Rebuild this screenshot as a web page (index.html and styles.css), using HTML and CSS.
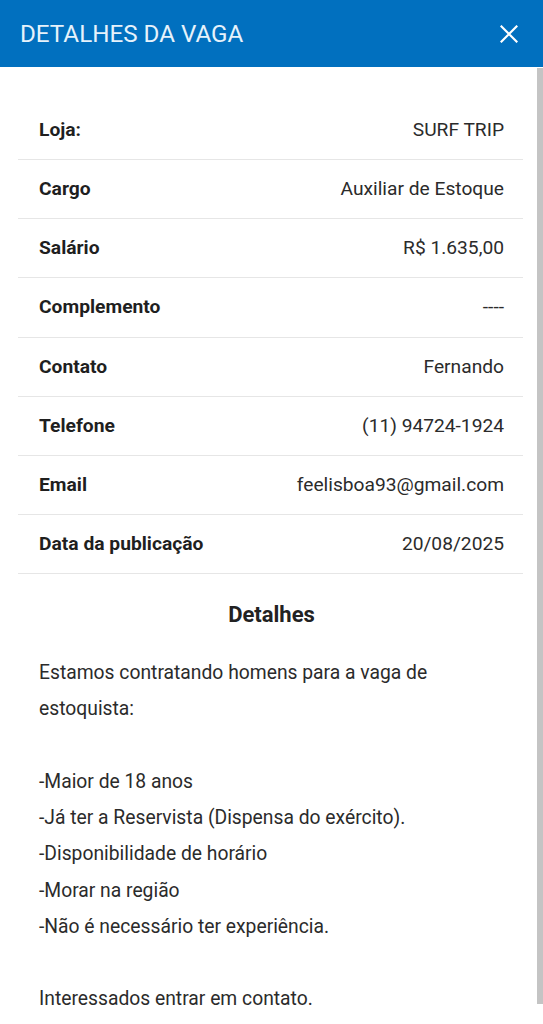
FILE: index.html
```html
<!DOCTYPE html>
<html lang="pt-BR">
<head>
<meta charset="utf-8">
<title>Detalhes da vaga</title>
<link rel="stylesheet" href="styles.css">
</head>
<body>
<header class="topbar">
  <h1 class="title">DETALHES DA VAGA</h1>
  <button class="close" aria-label="Fechar">
    <svg width="18" height="18" viewBox="0 0 18 18"><path d="M1.5 1.5 L16.5 16.5 M16.5 1.5 L1.5 16.5" stroke="#ffffff" stroke-width="2.2" stroke-linecap="square"/></svg>
  </button>
</header>
<div class="body">
  <main class="content">
    <div class="list">
      <div class="row"><span class="label">Loja:</span><span class="value">SURF TRIP</span></div>
      <div class="row"><span class="label">Cargo</span><span class="value">Auxiliar de Estoque</span></div>
      <div class="row"><span class="label">Salário</span><span class="value">R$ 1.635,00</span></div>
      <div class="row"><span class="label">Complemento</span><span class="value">----</span></div>
      <div class="row"><span class="label">Contato</span><span class="value">Fernando</span></div>
      <div class="row"><span class="label">Telefone</span><span class="value">(11) 94724-1924</span></div>
      <div class="row"><span class="label">Email</span><span class="value">feelisboa93@gmail.com</span></div>
      <div class="row"><span class="label">Data da publicação</span><span class="value">20/08/2025</span></div>
    </div>
    <section class="details">
      <h2 class="details-title">Detalhes</h2>
      <p class="details-text">Estamos contratando homens para a vaga de estoquista:<br><br>-Maior de 18 anos<br>-Já ter a Reservista (Dispensa do exército).<br>-Disponibilidade de horário<br>-Morar na região<br>-Não é necessário ter experiência.<br><br>Interessados entrar em contato.</p>
    </section>
  </main>
  <div class="scrollbar"><div class="thumb"></div></div>
</div>
</body>
</html>
```
FILE: styles.css
```css
* { box-sizing: border-box; }
html, body { margin: 0; padding: 0; }
body {
  width: 543px;
  height: 1024px;
  overflow: hidden;
  background: #ffffff;
  font-family: Roboto, "Liberation Sans", Arial, sans-serif;
  color: #262626;
}
.topbar {
  height: 67px;
  background: #0170bf;
  display: flex;
  align-items: center;
  justify-content: space-between;
  padding: 1px 25px 0 20px;
}
.title {
  margin: 0;
  font-size: 24.2px;
  font-weight: 400;
  color: #e6f2fb;
  letter-spacing: 0;
}
.close {
  background: none;
  border: 0;
  padding: 0;
  width: 18px;
  height: 18px;
  display: flex;
}
.body {
  display: flex;
  height: 957px;
}
.content {
  flex: 1;
  padding: 34px 14px 0 18px;
}
.scrollbar {
  width: 6px;
  padding-top: 1px;
}
.thumb {
  height: 936px;
  background: #c4c4c4;
}
.list { display: flex; flex-direction: column; }
.row {
  height: 59.15px;
  border-bottom: 1px solid #e6e6e6;
  display: flex;
  align-items: center;
  justify-content: space-between;
  padding: 0 19px 1px 21px;
}
.label { font-weight: 700; color: #1f1f1f; font-size: 19.25px; }
.value { color: #2b2b2b; font-size: 19.2px; }
.details { padding: 0 19px 0 21px; }
.details-title {
  margin: 26px 0 0;
  text-align: center;
  font-size: 22px;
  font-weight: 700;
  line-height: 30px;
  color: #222222;
}
.details-text {
  margin: 25px 0 0;
  font-size: 19.3px;
  line-height: 36.25px;
  color: #2b2b2b;
}
```
